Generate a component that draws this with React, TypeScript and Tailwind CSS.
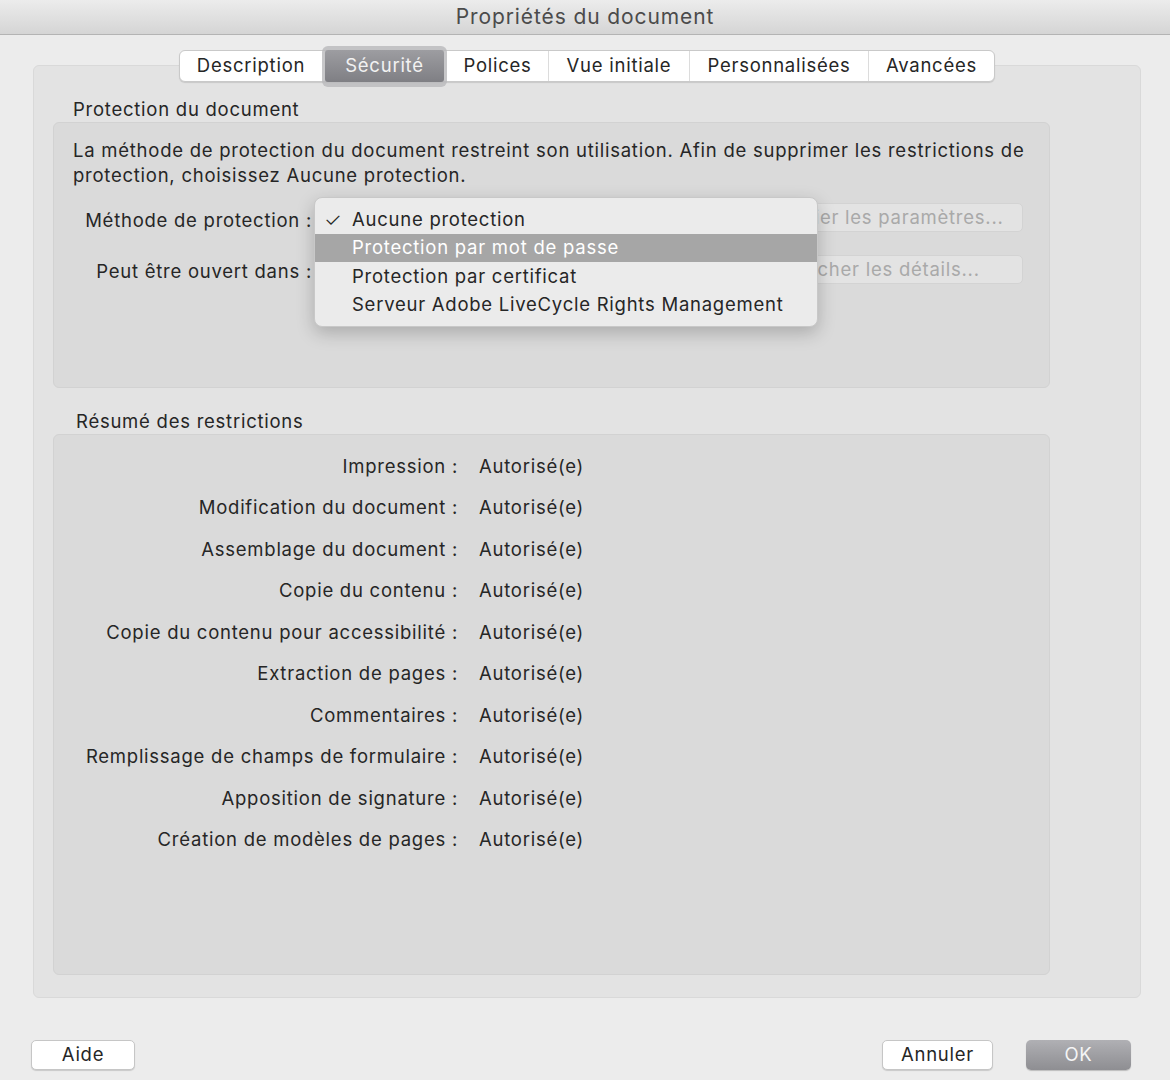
import React from "react";

const font = { fontFamily: "Inter, 'Noto Sans', sans-serif" };

const rows = [
  "Impression :",
  "Modification du document :",
  "Assemblage du document :",
  "Copie du contenu :",
  "Copie du contenu pour accessibilité :",
  "Extraction de pages :",
  "Commentaires :",
  "Remplissage de champs de formulaire :",
  "Apposition de signature :",
  "Création de modèles de pages :",
];

const tabs = ["Description", "Sécurité", "Polices", "Vue initiale", "Personnalisées", "Avancées"];
const tabWidths = ["w-[142px]", "w-[125px]", "w-[101px]", "w-[141px]", "w-[179px]", "w-[126px]"];

export default function App() {
  return (
    <div
      className="w-[1170px] h-[1080px] bg-[#ececec] flex flex-col text-[#262626] overflow-hidden tracking-[0.75px]"
      style={font}
    >
      {/* title bar */}
      <div className="h-[35px] shrink-0 flex items-center justify-center bg-gradient-to-b from-[#ececec] to-[#d5d5d5] border-b border-[#b4b4b4]">
        <span className="text-[21px] text-[#4b4b4b] tracking-[0.9px]">Propriétés du document</span>
      </div>

      <div className="flex flex-col px-[33px] pr-[29px] pt-[15px]">
        {/* tabs */}
        <div className="flex justify-center relative z-10">
          <div className="flex h-[32px] bg-white border border-[#c9c9c9] rounded-[6px] shadow-[0_1px_1px_rgba(0,0,0,0.12)]">
            {tabs.map((t, i) => {
              const sel = i === 1;
              return sel ? (
                <div
                  key={t}
                  className={`${tabWidths[i]} relative flex items-center justify-center`}
                >
                  <div className="absolute left-0 right-0 -top-[5px] -bottom-[6px] rounded-[6px] bg-[#b9b9bb]/80" />
                  <div className="absolute left-[3px] right-[3px] -top-[1px] -bottom-[1px] rounded-[3px] bg-gradient-to-b from-[#9d9da1] to-[#7f7f84]" />
                  <span className="relative text-[18.5px] text-[#f2f2f2]">{t}</span>
                </div>
              ) : (
                <div
                  key={t}
                  className={`${tabWidths[i]} flex items-center justify-center text-[18.5px] ${
                    i > 2 ? "border-l border-[#dcdcdc]" : ""
                  }`}
                >
                  {t}
                </div>
              );
            })}
          </div>
        </div>

        {/* tab panel */}
        <div className="-mt-[17px] h-[933px] bg-[#e3e3e3] rounded-[6px] border border-[#d9d9d9] pt-[30px] pl-[19px] pr-[90px] flex flex-col">
          <div className="text-[18.5px] pl-[20px] h-[26px] leading-[26px]">Protection du document</div>

          <div className="relative mt-0 h-[266px] bg-[#dadada] rounded-[6px] border border-[#d2d2d2] pt-[15px] pl-[19px] pr-[26px]">
            <p className="text-[18.5px] leading-[25px] whitespace-nowrap">
              La méthode de protection du document restreint son utilisation. Afin de supprimer les restrictions de
              <br />
              protection, choisissez Aucune protection.
            </p>

            <div className="flex items-start mt-[15px] h-[30px]">
              <div className="w-[239px] mt-[5px] leading-[25px] text-right text-[18.5px] whitespace-nowrap">
                Méthode de protection :
              </div>
              <div className="flex-1" />
              <div className="w-[282px] h-[29px] rounded-[5px] bg-[#e3e3e3] border border-[#d3d3d3] flex items-center justify-center text-[18.5px] text-[#a9a9a9] whitespace-nowrap">
                Modifier les paramètres...
              </div>
            </div>
            <div className="flex items-start mt-[22px] h-[30px]">
              <div className="w-[239px] mt-[4px] leading-[25px] text-right text-[18.5px] whitespace-nowrap">
                Peut être ouvert dans :
              </div>
              <div className="flex-1" />
              <div className="w-[282px] h-[29px] rounded-[5px] bg-[#e3e3e3] border border-[#d3d3d3] flex items-center justify-center text-[18.5px] text-[#a9a9a9] whitespace-nowrap">
                Afficher les détails...
              </div>
            </div>

            {/* dropdown menu */}
            <div className="absolute left-[260px] top-[74px] w-[504px] h-[130px] rounded-[8px] bg-[#ebebeb] border border-[#c8c8c8] shadow-[0_6px_18px_rgba(0,0,0,0.22)] py-[7px] flex flex-col text-[18.5px]">
              <div className="h-[29px] flex items-center">
                <span className="w-[37px] pl-[9px] text-[20px] font-light tracking-normal">✓</span>
                <span>Aucune protection</span>
              </div>
              <div className="h-[29px] flex items-center bg-[#a6a6a6] text-white">
                <span className="w-[37px]" />
                <span>Protection par mot de passe</span>
              </div>
              <div className="h-[29px] flex items-center">
                <span className="w-[37px]" />
                <span>Protection par certificat</span>
              </div>
              <div className="h-[29px] flex items-center">
                <span className="w-[37px]" />
                <span>Serveur Adobe LiveCycle Rights Management</span>
              </div>
            </div>
          </div>

          <div className="text-[18.5px] pl-[23px] mt-[20px] h-[26px] leading-[26px]">Résumé des restrictions</div>

          <div className="mt-[0px] h-[541px] bg-[#dadada] rounded-[6px] border border-[#d2d2d2] pt-[11px]">
            {rows.map((r) => (
              <div key={r} className="flex items-center h-[41.5px] text-[18.5px]">
                <div className="w-[404px] text-right whitespace-nowrap">{r}</div>
                <div className="ml-[21px]">Autorisé(e)</div>
              </div>
            ))}
          </div>
        </div>

        {/* bottom buttons */}
        <div className="flex items-center mt-[42px] -ml-[2px] pr-[10px]">
          <div className="w-[104px] h-[30px] bg-white rounded-[5px] border border-[#c6c6c6] shadow-[0_1px_1px_rgba(0,0,0,0.15)] flex items-center justify-center text-[18.5px]">
            Aide
          </div>
          <div className="flex-1" />
          <div className="w-[111px] h-[30px] bg-white rounded-[5px] border border-[#c6c6c6] shadow-[0_1px_1px_rgba(0,0,0,0.15)] flex items-center justify-center text-[18.5px]">
            Annuler
          </div>
          <div className="w-[105px] h-[30px] ml-[33px] rounded-[5px] bg-gradient-to-b from-[#b0b0b4] to-[#8e8e92] shadow-[0_1px_1px_rgba(0,0,0,0.2)] flex items-center justify-center text-[18.5px] text-[#f5f5f5]">
            OK
          </div>
        </div>
      </div>
    </div>
  );
}
